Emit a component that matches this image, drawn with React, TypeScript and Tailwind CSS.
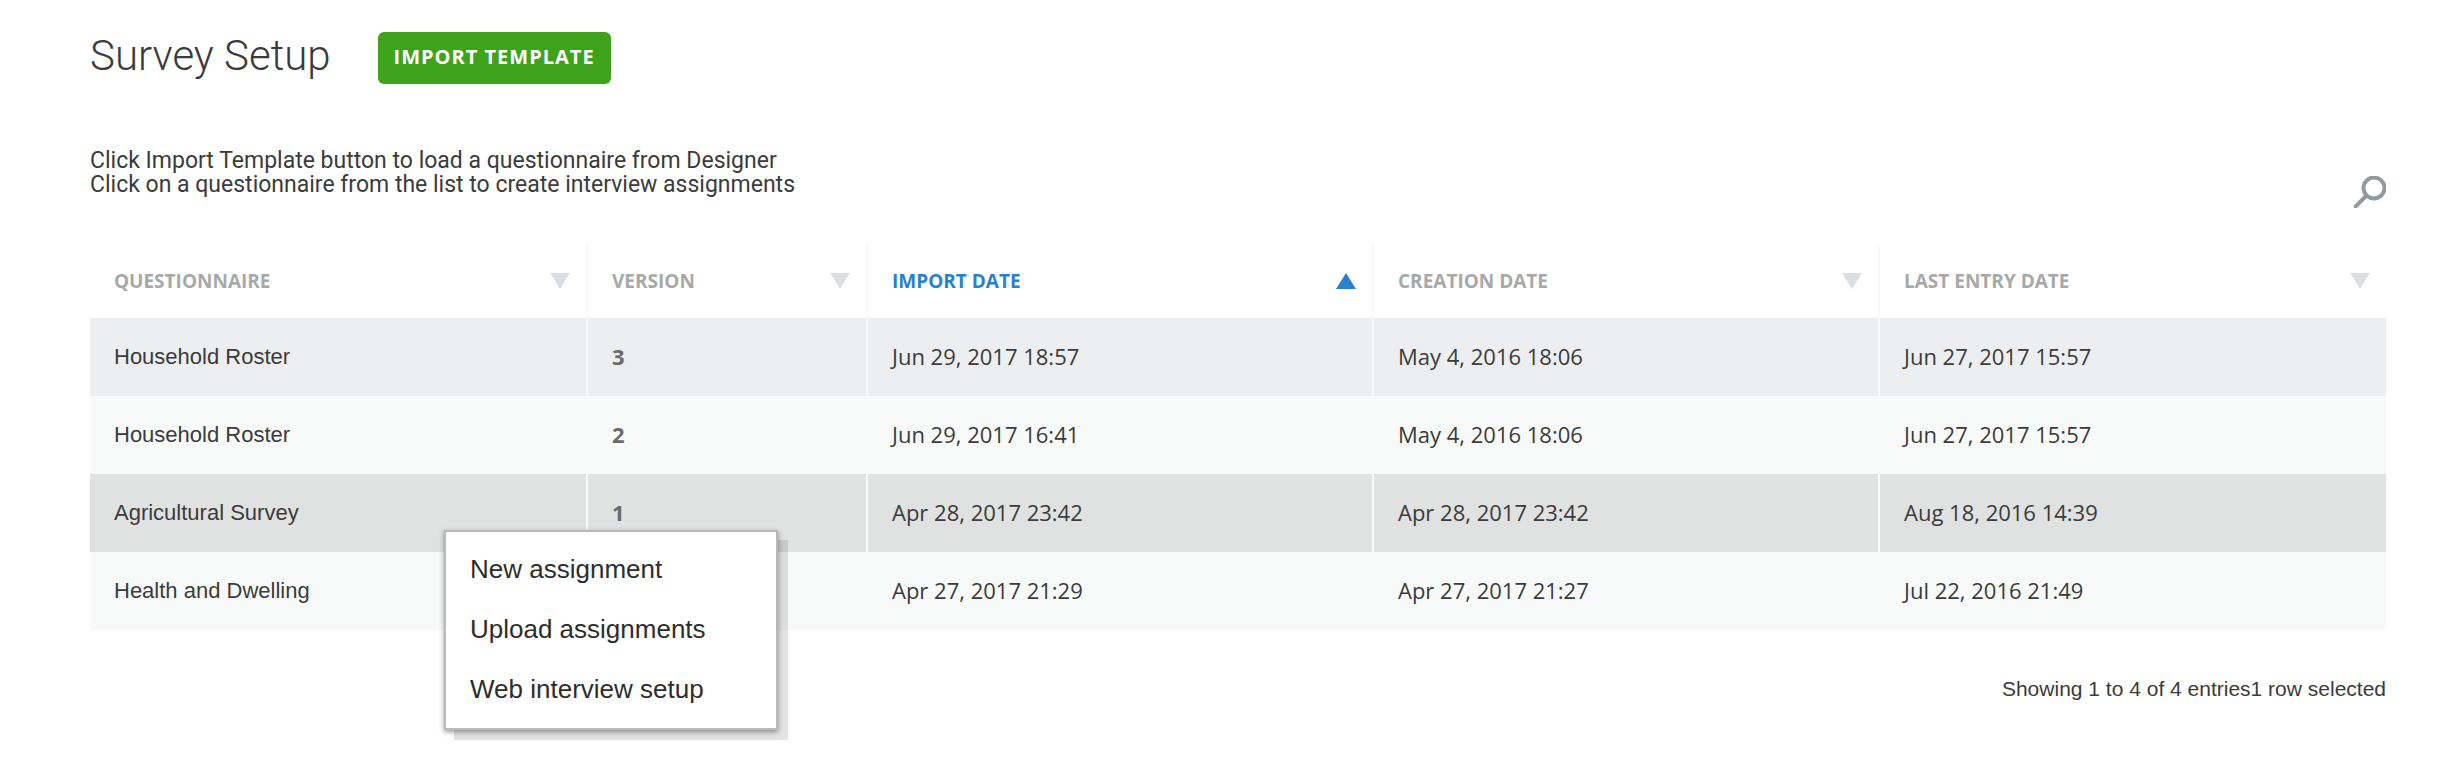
import React from "react";

type Survey = {
  name: string;
  version?: number;
  imported: string;
  created: string;
  lastEntry: string;
  selected?: boolean;
};

const columns = [
  { label: "Questionnaire", width: "w-[498px]" },
  { label: "Version", width: "w-[280px]" },
  { label: "Import date", width: "", sorted: true },
  { label: "Creation date", width: "" },
  { label: "Last entry date", width: "" },
];

const surveys: Survey[] = [
  { name: "Household Roster", version: 3, imported: "Jun 29, 2017 18:57", created: "May 4, 2016 18:06", lastEntry: "Jun 27, 2017 15:57" },
  { name: "Household Roster", version: 2, imported: "Jun 29, 2017 16:41", created: "May 4, 2016 18:06", lastEntry: "Jun 27, 2017 15:57" },
  { name: "Agricultural Survey", version: 1, imported: "Apr 28, 2017 23:42", created: "Apr 28, 2017 23:42", lastEntry: "Aug 18, 2016 14:39", selected: true },
  { name: "Health and Dwelling", imported: "Apr 27, 2017 21:29", created: "Apr 27, 2017 21:27", lastEntry: "Jul 22, 2016 21:49" },
];

const menuItems = ["New assignment", "Upload assignments", "Web interview setup"];

function SortArrow({ up }: { up?: boolean }) {
  return (
    <svg width="20" height="16" viewBox="0 0 20 16" aria-hidden="true" className={up ? "fill-[#2a81cb]" : "fill-[#dbdfe2]"}>
      <path d={up ? "M0 16L10 0l10 16z" : "M0 0h20L10 16z"} />
    </svg>
  );
}

function RowMenu() {
  return (
    <div
      role="menu"
      className="absolute top-[56px] left-[354px] z-10 flex w-[334px] flex-col border-2 border-[#b9b9b9] bg-white py-2 shadow-[0_2px_5px_rgba(0,0,0,0.4),10px_10px_0_rgba(0,0,0,0.11)]"
    >
      {menuItems.map((item) => (
        <button key={item} type="button" role="menuitem" className="h-[60px] px-6 pb-0.5 text-left text-[26px] text-[#2d2d2d]">
          {item}
        </button>
      ))}
    </div>
  );
}

function rowColor(survey: Survey, index: number) {
  if (survey.selected) return "bg-[#e0e2e1]";
  return index % 2 === 0 ? "bg-[#edeef0]" : "bg-[#f8faf9]";
}

export default function App() {
  return (
    <main className="bg-white pt-8 pr-[58px] pb-14 pl-[90px] font-['Liberation_Sans',Arial,sans-serif] text-[#3b3b3b]">
      <header className="flex items-start gap-[47px]">
        <h1 className="font-[Roboto,sans-serif] text-[42px] leading-[48px] font-light">Survey Setup</h1>
        <button
          type="button"
          className="h-[52px] rounded-md bg-[#3ea31b] px-4 pb-0.5 font-['Open_Sans',sans-serif] text-[20px] font-bold tracking-wider text-white uppercase"
        >
          Import template
        </button>
      </header>

      <div className="mt-[65px] flex items-end justify-between">
        <p className="pb-[11px] font-[Roboto,sans-serif] text-[23px] leading-6">
          Click Import Template button to load a questionnaire from Designer
          <br />
          Click on a questionnaire from the list to create interview assignments
        </p>
        <button type="button" aria-label="Search">
          <svg width="32" height="32" viewBox="0 0 32 32" fill="none" stroke="#919a9f" strokeWidth="4" aria-hidden="true">
            <circle cx="20" cy="12" r="10.5" />
            <path d="M12.500 19.500L0 32" />
          </svg>
        </button>
      </div>

      <table className="mt-9 w-full table-fixed border-separate border-spacing-0 text-left">
        <thead className="font-['Open_Sans',sans-serif] text-[19px] text-[#a7a9a9] uppercase">
          <tr>
            {columns.map((column) => (
              <th
                key={column.label}
                scope="col"
                aria-sort={column.sorted ? "ascending" : "none"}
                className={`h-[74px] border-r-2 border-[#f8faf9] p-0 pr-4 pl-6 font-bold last:border-r-0 ${column.width}`}
              >
                <button
                  type="button"
                  className={`flex w-full items-center justify-between uppercase ${column.sorted ? "text-[#2a81cb]" : ""}`}
                >
                  {column.label}
                  <SortArrow up={column.sorted} />
                </button>
              </th>
            ))}
          </tr>
        </thead>
        <tbody className="text-[22px] [&_td]:h-[78px] [&_td]:border-r-2 [&_td]:border-[#f8faf9] [&_td]:pt-0 [&_td]:pb-0.5 [&_td]:pl-6 [&_td:last-child]:border-r-0">
          {surveys.map((survey, index) => (
            <tr key={index} className={rowColor(survey, index)}>
              <td className="relative">
                {survey.name}
                {survey.selected && <RowMenu />}
              </td>
              <td className="font-['Open_Sans',sans-serif] font-bold text-[#6b6b6b]">{survey.version}</td>
              <td className="font-['Open_Sans',sans-serif]">{survey.imported}</td>
              <td className="font-['Open_Sans',sans-serif]">{survey.created}</td>
              <td className="font-['Open_Sans',sans-serif]">{survey.lastEntry}</td>
            </tr>
          ))}
        </tbody>
      </table>

      <p className="mt-[45px] text-right text-[21px] leading-7">Showing 1 to 4 of 4 entries1 row selected</p>
    </main>
  );
}
